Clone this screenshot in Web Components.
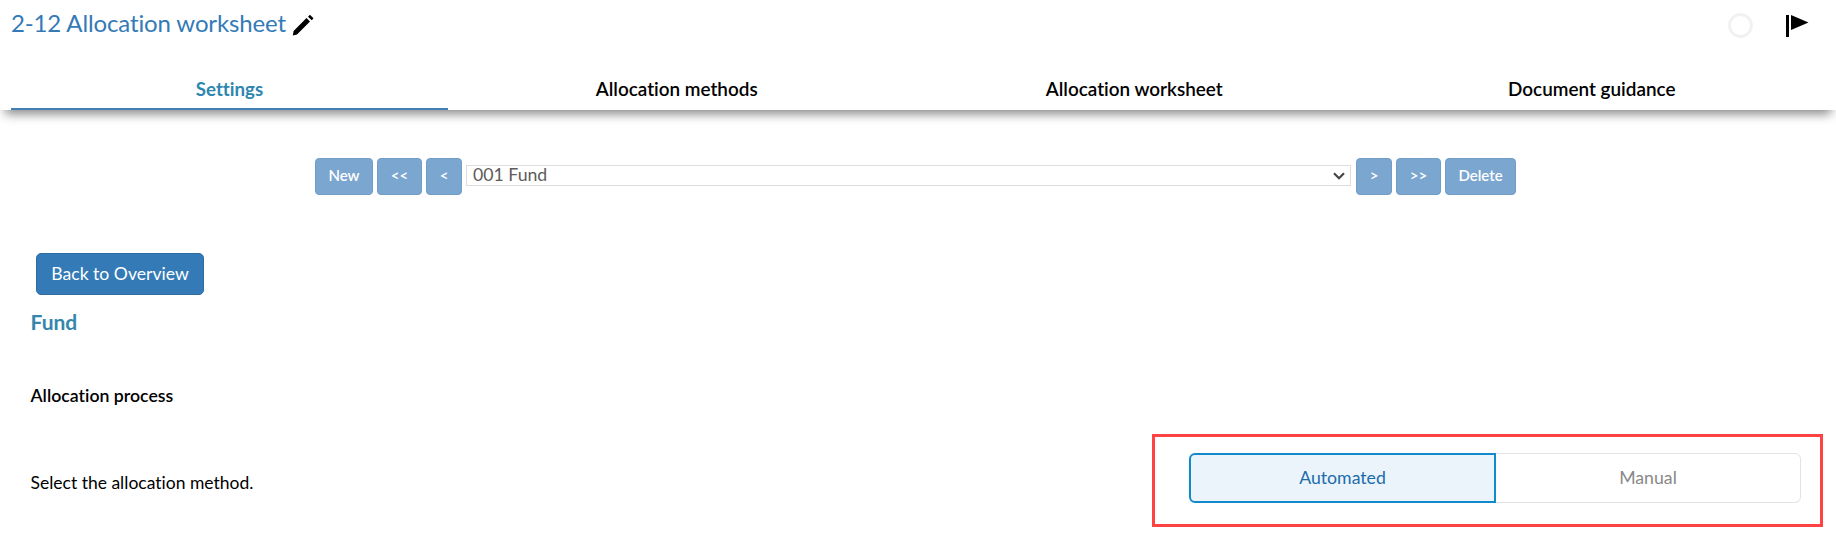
<!DOCTYPE html>
<html lang="en"><head><meta charset="utf-8"><title>2-12 Allocation worksheet</title>
<style>html,body{margin:0;background:#fff}body{font-family:Lato,"Liberation Sans",sans-serif;height:558px;overflow:hidden;font-variant-ligatures:none}</style></head>
<body><worksheet-page></worksheet-page>
<script>
function define(name, html){
  const t=document.createElement('template'); t.innerHTML=html;
  customElements.define(name, class extends HTMLElement{
    constructor(){super();this.attachShadow({mode:'open'}).appendChild(t.content.cloneNode(true));}
  });
}
define('page-header',`<style>
:host{display:block;height:110px;box-sizing:border-box;background:#fff;box-shadow:0 9px 10px -5px #888;padding-left:11px;padding-right:14px}
.top{display:flex;height:69px;align-items:flex-start}
h1{margin:0;padding-top:8px;width:275px;font-weight:400;font-size:24px;letter-spacing:-.13px;line-height:30px;color:#337ab7;white-space:nowrap}
.pencil{margin:14px 0 0 6px}.circle{margin:13px 0 0 auto}.flag{margin:14px 13px 0 33px}
svg{display:block}
nav{display:flex;height:41px}
</style><div class="top"><h1>2-12 Allocation worksheet</h1>
<svg class="pencil" width="22" height="22" viewBox="0 0 22 22"><path d="M.8 21.500l.8-4.500L14.500 4l3.500 3.500L5 20.500ZM16 2.800l1.900-2 3.600 3.400-1.700 2Z"/></svg>
<svg class="circle" width="25" height="25" viewBox="0 0 25 25"><circle cx="12.5" cy="12.5" r="11" fill="none" stroke="#f1f1f1" stroke-width="2.8"/></svg>
<svg class="flag" width="23" height="24" viewBox="0 0 23 24"><path d="M0 1h3v22H0ZM5 1l17.500 7.500L5 16Z"/></svg></div>
<nav><slot></slot></nav>`);
define('nav-tab',`<style>
:host{display:block;box-sizing:border-box;flex:0 0 457.500px;height:41px;padding-top:8px;text-align:center;font-weight:600;font-size:18.900px;line-height:24px;color:#000;white-space:nowrap}
:host([active]){flex-basis:437px;color:#2d86b0;border-bottom:2px solid #4180b5;font-weight:700;font-size:18.700px}
</style><slot></slot>`);
define('pager-button',`<style>
:host{display:flex;box-sizing:border-box;width:var(--w);height:37px;border:1px solid #719ec8;border-radius:4px;background:#7ba6d0;color:#fff;align-items:center;justify-content:center;font-weight:600;font-size:15px;line-height:20px;padding-bottom:3px}
</style><span><slot></slot></span>`);
define('fund-select',`<style>
:host{display:flex;box-sizing:border-box;width:885px;height:21px;margin-right:1px;border:1px solid #ddd;align-items:center;justify-content:space-between;padding:0 5px 0 6px;margin-top:-2px;font-size:17.700px;line-height:18px;color:#5c5c5c}
span{margin-top:-2px}svg{margin-top:1px}
</style><span><slot></slot></span><svg width="12" height="8" viewBox="0 0 12 8"><path d="M1 1.200l5 5 5-5" fill="none" stroke="#444" stroke-width="2.200"/></svg>`);
define('record-pager',`<style>:host{display:flex;gap:4px;height:37px;align-items:center;margin:48px 0 0 315px}</style><slot></slot>`);
define('action-button',`<style>
:host{display:flex;box-sizing:border-box;width:168px;height:42px;border:1px solid #2e6da4;border-radius:5px;background:#337ab7;color:#fff;align-items:center;justify-content:center;font-size:17.600px;line-height:24px;padding-bottom:1px;margin:58px 0 0 36px;white-space:nowrap}
</style><span><slot></slot></span>`);
define('choice-option',`<style>
:host{display:flex;box-sizing:border-box;width:305px;height:50px;border:1px solid #e3e3e3;border-left:0;border-radius:0 6px 6px 0;align-items:center;justify-content:center;font-size:17.700px;line-height:24px;color:#888;padding-bottom:1px}
:host([selected]){width:307px;border:2px solid #118acb;border-radius:6px 0 0 6px;background:#ebf3fb;color:#1b6cab}
</style><span><slot></slot></span>`);
define('choice-group',`<style>
:host{display:flex;box-sizing:border-box;width:671px;height:93px;border:3px solid #ff4343;padding:16px 0 0 34px;margin-right:13px}
</style><slot></slot>`);
define('worksheet-page',`<style>
:host{display:block}
h2,h3,p{margin:0 0 0 30.500px;white-space:nowrap}
h2{font-size:21px;line-height:28px;font-weight:700;color:#3486ad;margin-top:13px}
h3{font-size:17.700px;line-height:24px;font-weight:600;color:#000;margin-top:48px}
.row{display:flex;justify-content:space-between;margin-top:26px}
p{font-size:17.500px;line-height:24px;color:#000;padding-top:37px}
</style>
<page-header><nav-tab active>Settings</nav-tab><nav-tab>Allocation methods</nav-tab><nav-tab>Allocation worksheet</nav-tab><nav-tab>Document guidance</nav-tab></page-header>
<record-pager><pager-button style="--w:58px">New</pager-button><pager-button style="--w:45px">&lt;&lt;</pager-button><pager-button style="--w:36px">&lt;</pager-button><fund-select>001 Fund</fund-select><pager-button style="--w:36px">&gt;</pager-button><pager-button style="--w:45px">&gt;&gt;</pager-button><pager-button style="--w:71px">Delete</pager-button></record-pager>
<action-button>Back to Overview</action-button>
<h2>Fund</h2><h3>Allocation process</h3>
<div class="row"><p>Select the allocation method.</p><choice-group><choice-option selected>Automated</choice-option><choice-option>Manual</choice-option></choice-group></div>`);
</script></body></html>
